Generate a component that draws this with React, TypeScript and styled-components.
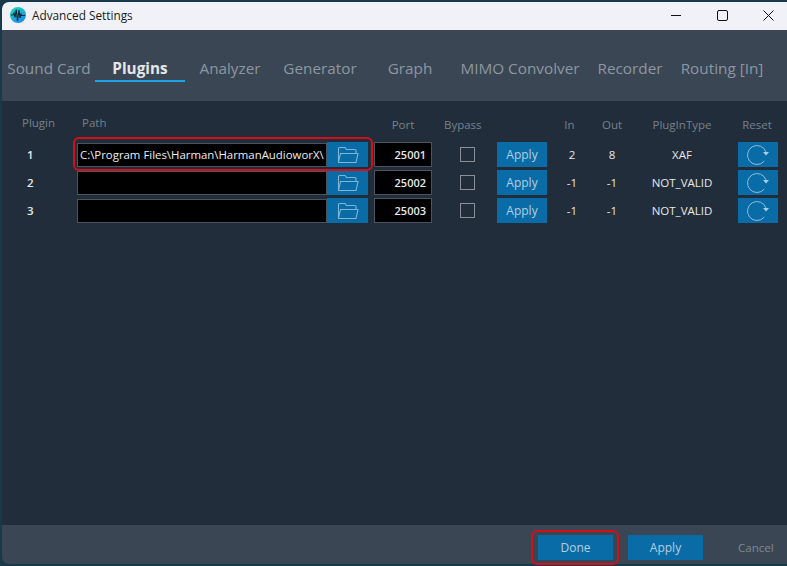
import React from "react";
import styled, { createGlobalStyle } from "styled-components";

const Global = createGlobalStyle`
  html, body { margin: 0; padding: 0; width: 787px; height: 566px; overflow: hidden; background: #17394b; }
  * { box-sizing: border-box; }
`;

const Stage = styled.div`
  position: relative;
  width: 787px;
  height: 566px;
  padding: 2px 0 2px 2px;
  font-family: "Open Sans", "Noto Sans", sans-serif;
`;

const Win = styled.div`
  width: 785px;
  height: 562px;
  display: flex;
  flex-direction: column;
  border-radius: 7px 0 0 7px;
  overflow: hidden;
`;

const TitleBar = styled.div`
  height: 28px;
  flex: none;
  display: flex;
  align-items: center;
  background: #f0f2f8;
  padding: 0 0 2px 8px;
  margin-right: -4px;
`;

const TitleText = styled.span`
  margin-left: 6px;
  font-size: 11.8px;
  color: #1a1a1a;
  flex: 1;
`;

const WinBtn = styled.div`
  width: 46px;
  height: 26px;
  display: flex;
  align-items: center;
  justify-content: center;
`;

const Tabs = styled.div`
  height: 71px;
  flex: none;
  background: #3a4654;
  display: flex;
  padding: 30px 0 0 1px;
  align-items: flex-start;
`;

const Tab = styled.div<{ $w: number; $active?: boolean }>`
  width: ${(p) => p.$w}px;
  height: 22px;
  flex: none;
  text-align: center;
  font-size: 15.3px;
  line-height: 16px;
  white-space: nowrap;
  font-weight: ${(p) => (p.$active ? 700 : 400)};
  color: ${(p) => (p.$active ? "#e4e6e8" : "#8d97a1")};
  border-bottom: 2px solid ${(p) => (p.$active ? "#1ba3e6" : "transparent")};
`;

const Content = styled.div`
  flex: 1;
  background: #212d3a;
  padding-top: 15px;
`;

const Grid = styled.div`
  display: grid;
  grid-template-columns: 75px 250px 41px 6px 58px 65px 50px 45px 40px 100px 46px;
  grid-auto-rows: 25px;
  row-gap: 3px;
  align-items: center;
`;

const HeaderRow = styled.div`
  display: grid;
  grid-template-columns: 75px 250px 41px 6px 58px 65px 50px 45px 40px 100px 46px;
  height: 26px;
  align-items: start;
`;

const Head = styled.div<{ $pad?: number; $center?: boolean; $low?: boolean }>`
  font-size: 11.5px;
  line-height: 14px;
  color: #76818c;
  margin-top: ${(p) => (p.$low ? 2 : 0)}px;
  padding-left: ${(p) => p.$pad ?? 0}px;
  text-align: ${(p) => (p.$center ? "center" : "left")};
  white-space: nowrap;
`;

const Cell = styled.div<{ $pad?: number }>`
  font-size: 11.5px;
  color: #e6e8ea;
  text-align: center;
  padding-left: ${(p) => p.$pad ?? 0}px;
  white-space: nowrap;
`;

const NumCell = styled(Cell)`
  text-align: left;
  padding-left: 25px;
  font-weight: 600;
`;

const PathField = styled.div`
  height: 24px;
  background: #000;
  border: 1px solid #4a545e;
  color: #eceef0;
  font-size: 11.4px;
  line-height: 22px;
  padding-left: 2px;
  overflow: hidden;
  white-space: nowrap;
`;

const IconButton = styled.div`
  height: 25px;
  background: #0a6ca6;
  display: flex;
  align-items: center;
  justify-content: center;
`;

const Port = styled.div`
  height: 25px;
  background: #000;
  border: 1px solid #4a545e;
  color: #e8e8e8;
  font-size: 11px;
  font-weight: 600;
  line-height: 23px;
  text-align: right;
  padding-right: 5px;
`;

const CheckWrap = styled.div`
  padding-left: 28px;
`;

const Check = styled.div`
  width: 15px;
  height: 15px;
  border: 1px solid #8a8f94;
`;

const ApplySmall = styled.div`
  height: 25px;
  background: #0a6ca6;
  color: #b4cfe0;
  font-size: 12px;
  line-height: 26px;
  text-align: center;
`;

const ResetWrap = styled.div`
  padding-left: 6px;
`;

const Footer = styled.div`
  height: 39px;
  flex: none;
  background: #3a4654;
  display: flex;
  align-items: center;
  padding: 5px 0 0 536px;
`;

const FooterBtn = styled.div<{ $mr: number }>`
  width: 75px;
  height: 25px;
  margin-right: ${(p) => p.$mr}px;
  background: #0a6ca6;
  color: #b4cfe0;
  font-size: 12px;
  line-height: 25px;
  text-align: center;
`;

const Cancel = styled.div`
  margin-left: 35px;
  font-size: 11.5px;
  color: #7f8993;
`;

const Callout = styled.div<{ $x: number; $y: number; $w: number; $h: number }>`
  position: absolute;
  left: ${(p) => p.$x}px;
  top: ${(p) => p.$y}px;
  width: ${(p) => p.$w}px;
  height: ${(p) => p.$h}px;
  border: 2px solid #d3101a;
  border-radius: 6px;
  pointer-events: none;
`;

const Logo = () => (
  <svg width="16" height="16" viewBox="0 0 16 16">
    <defs>
      <linearGradient id="lg" x1="0" y1="0" x2="0.6" y2="1">
        <stop offset="0" stopColor="#1fe0b0" />
        <stop offset="1" stopColor="#1a8cf0" />
      </linearGradient>
    </defs>
    <circle cx="8" cy="8" r="8" fill="url(#lg)" />
    <path d="M1 8h2l1-2 1 4.5 1.2-8L7.5 14 9 3l1 8 1-4 .8 1.5H15" fill="none" stroke="#10283a" strokeWidth="1.1" />
  </svg>
);

const Folder = () => (
  <svg width="22" height="18" viewBox="0 0 22 18" fill="none" stroke="#7fb4d4" strokeWidth="1.1">
    <path d="M1.5 16.5V2.5a1 1 0 0 1 1-1h5.5l1.5 2h8.5a1 1 0 0 1 1 1v3" />
    <path d="M1.5 16.5L3.5 7.5h17.5l-2 9z" />
  </svg>
);

const ResetIcon = () => (
  <svg width="24" height="22" viewBox="0 0 24 22" fill="none">
    <path d="M18.3 17.1A9.5 9.5 0 1 1 20 8" stroke="#8fbdd8" strokeWidth="1" />
    <path d="M17 8h6l-3 3.5z" fill="#a8cde2" />
  </svg>
);

const rows = [
  { n: 1, path: "C:\\Program Files\\Harman\\HarmanAudioworX\\", port: 25001, i: "2", o: "8", t: "XAF" },
  { n: 2, path: "", port: 25002, i: "-1", o: "-1", t: "NOT_VALID" },
  { n: 3, path: "", port: 25003, i: "-1", o: "-1", t: "NOT_VALID" },
];

const tabs = [
  { l: "Sound Card", w: 92 },
  { l: "Plugins", w: 90, a: true },
  { l: "Analyzer", w: 90 },
  { l: "Generator", w: 90 },
  { l: "Graph", w: 90 },
  { l: "MIMO Convolver", w: 130 },
  { l: "Recorder", w: 90 },
  { l: "Routing [In]", w: 94 },
];

export default function App() {
  return (
    <Stage>
      <Global />
      <Win>
        <TitleBar>
          <Logo />
          <TitleText>Advanced Settings</TitleText>
          <WinBtn>
            <svg width="10" height="10" viewBox="0 0 10 10"><path d="M0 5.5h10" stroke="#111" /></svg>
          </WinBtn>
          <WinBtn>
            <svg width="11" height="11" viewBox="0 0 11 11"><rect x=".5" y=".5" width="10" height="10" rx="1.5" fill="none" stroke="#111" /></svg>
          </WinBtn>
          <WinBtn>
            <svg width="11" height="11" viewBox="0 0 11 11"><path d="M.5.5l10 10M10.5.5l-10 10" stroke="#111" /></svg>
          </WinBtn>
        </TitleBar>
        <Tabs>
          {tabs.map((t) => (
            <Tab key={t.l} $w={t.w} $active={t.a}>{t.l}</Tab>
          ))}
        </Tabs>
        <Content>
          <HeaderRow>
            <Head $pad={20}>Plugin</Head>
            <Head $pad={5}>Path</Head>
            <span />
            <span />
            <Head $center $low>Port</Head>
            <Head $pad={12} $low>Bypass</Head>
            <span />
            <Head $center $low>In</Head>
            <Head $center $low>Out</Head>
            <Head $center $low>PlugInType</Head>
            <Head $center $low $pad={4}>Reset</Head>
          </HeaderRow>
          <Grid>
            {rows.map((r) => (
              <React.Fragment key={r.n}>
                <NumCell>{r.n}</NumCell>
                <PathField>{r.path}</PathField>
                <IconButton><Folder /></IconButton>
                <span />
                <Port>{r.port}</Port>
                <CheckWrap><Check /></CheckWrap>
                <ApplySmall>Apply</ApplySmall>
                <Cell $pad={5}>{r.i}</Cell>
                <Cell>{r.o}</Cell>
                <Cell>{r.t}</Cell>
                <ResetWrap><IconButton><ResetIcon /></IconButton></ResetWrap>
              </React.Fragment>
            ))}
          </Grid>
        </Content>
        <Footer>
          <FooterBtn $mr={15}>Done</FooterBtn>
          <FooterBtn $mr={0}>Apply</FooterBtn>
          <Cancel>Cancel</Cancel>
        </Footer>
      </Win>
      <Callout $x={73} $y={137} $w={300} $h={34} />
      <Callout $x={531} $y={530} $w={88} $h={35} />
    </Stage>
  );
}
